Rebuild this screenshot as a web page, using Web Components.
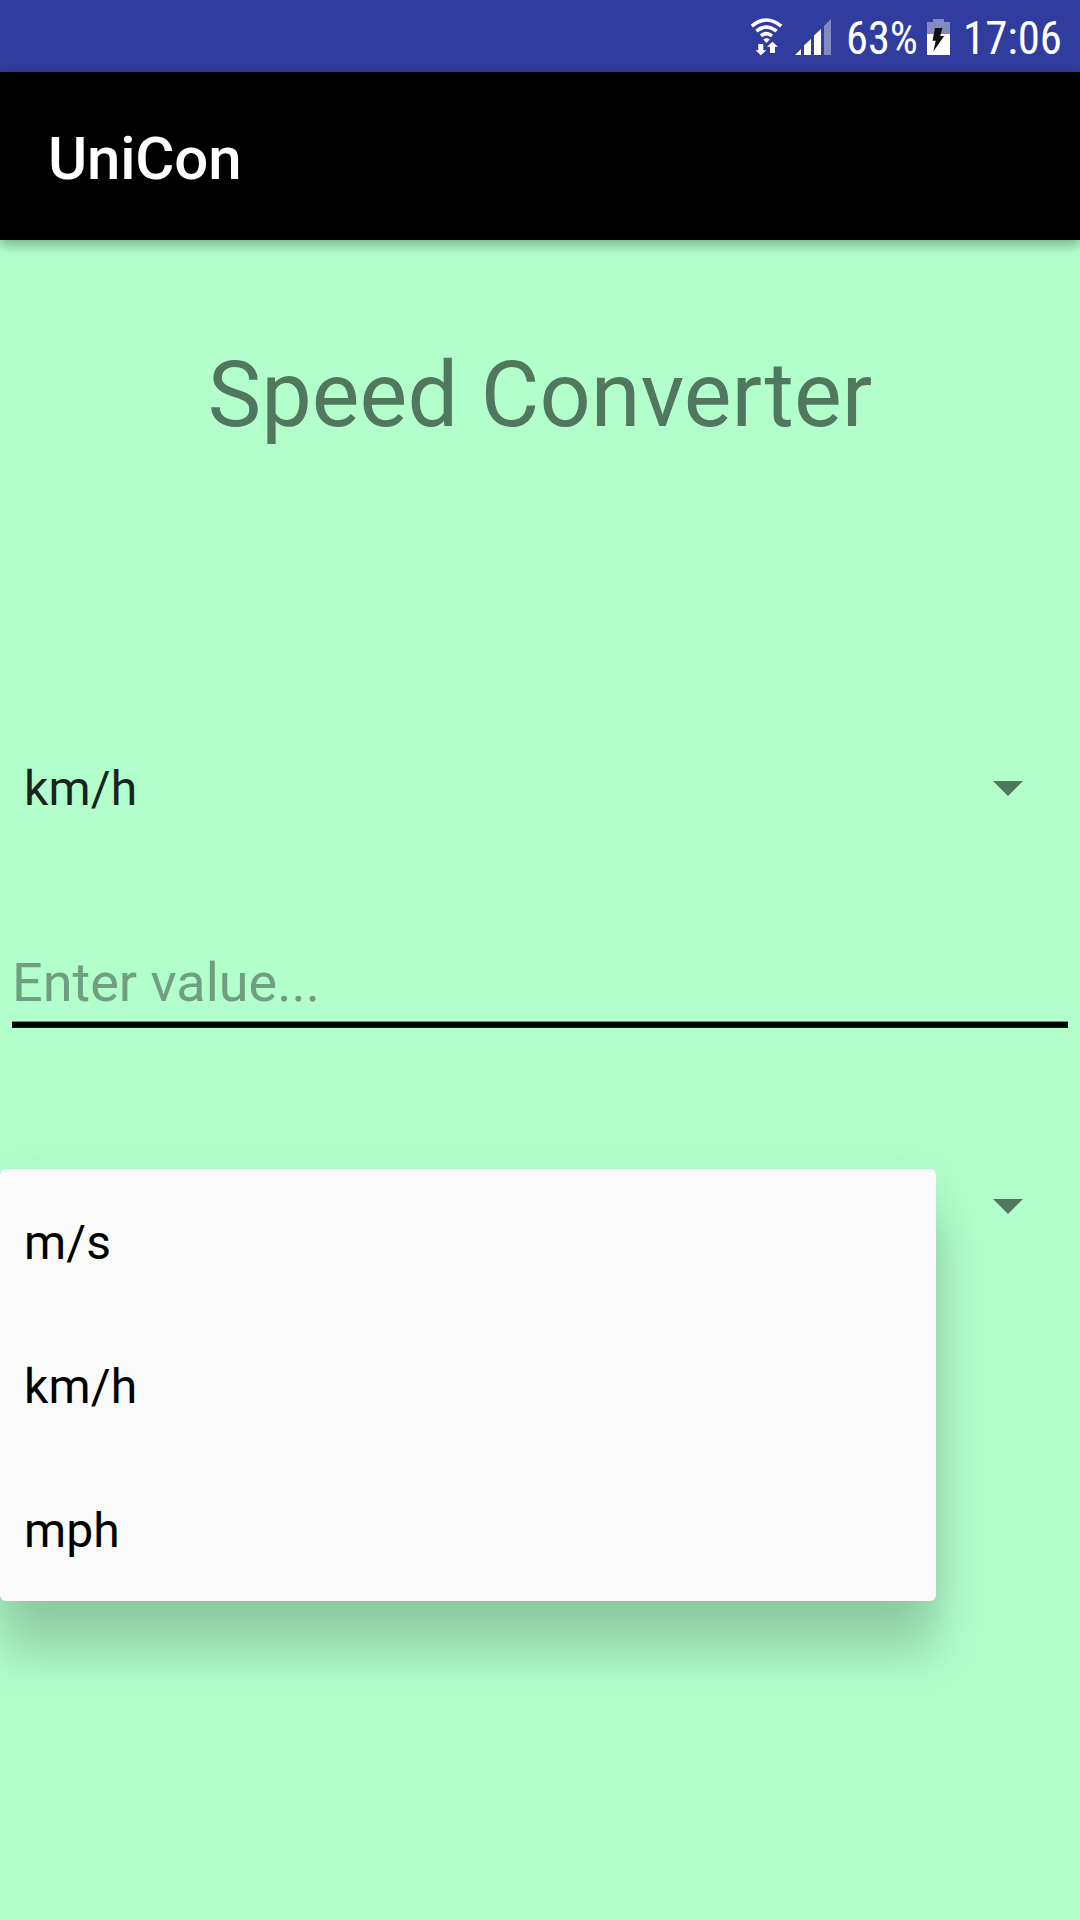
<!DOCTYPE html>
<html lang="en">
<head>
<meta charset="utf-8">
<title>UniCon</title>
<style>
html, body { margin: 0; height: 100%; background: #b2ffcc; }
body { font-family: Roboto, "Noto Sans", sans-serif; overflow: hidden; }
</style>
</head>
<body>
<converter-screen></converter-screen>
<script>
const define = (name, html) => {
  const t = document.createElement('template');
  t.innerHTML = html;
  customElements.define(name, class extends HTMLElement {
    constructor() {
      super();
      this.attachShadow({ mode: 'open' }).append(t.content.cloneNode(true));
    }
  });
};

define('status-bar', `
<style>
:host { display: block; height: 72px; background: #303d9e; }
svg { display: block; }
text { font-family: "Roboto Condensed", Roboto, sans-serif; font-size: 46px; fill: #fff; }
</style>
<svg width="1080" height="72" viewBox="0 0 1080 72">
  <g fill="none" stroke="#fff" stroke-width="3.6">
    <path d="M751.8 26.2Q766.5 13.8 781.2 26.2"/>
    <path d="M756.4 31.2Q766.5 22.8 776.6 31.2"/>
    <path d="M761 35.8Q766.5 31.3 772 35.8"/>
  </g>
  <path fill="#fff" d="M763.3 39.6Q766.5 37 769.7 39.6L766.5 43z"/>
  <path fill="#fff" d="M758.3 44h5v6.3h3L760.8 55.300l-5.200-5h2.700z"/>
  <path fill="#fff" d="M770 53v-6.300h-3L772.400 41.700l5.500 5H775V53z"/>
  <path fill="#fff" d="M795 55l6-6v6zM804 55V45.500l7-6.500V55zM814 55V35.500l7-6.500V55z"/>
  <path fill="#fff" fill-opacity=".4" d="M824 55V26l7-7V55z"/>
  <text x="846" y="54" textLength="72" lengthAdjust="spacingAndGlyphs">63%</text>
  <path fill="#fff" fill-opacity=".4" d="M933 19h11v3h6v12H927V22h6z"/>
  <path fill="#fff" d="M927 34h23v21H927z"/>
  <path fill="#111" d="M935 28h7.500l-2.300 8h4L933.300 51.500l2.400-10.700H932.500z"/>
  <text x="963" y="54" textLength="99" lengthAdjust="spacingAndGlyphs">17:06</text>
</svg>`);

define('app-bar', `
<style>
:host { display: flex; align-items: center; box-sizing: border-box; height: 168px; padding: 5px 48px 0;
  background: #000; color: #fff; font-size: 60px; line-height: 71px; font-weight: 500; letter-spacing: -.2px;
  position: relative; z-index: 1; box-shadow: 0 5px 12px rgba(0,0,0,.32); }
</style><slot></slot>`);

define('page-title', `
<style>
:host { display: block; box-sizing: border-box; padding-top: 103px; height: 476px; text-align: center;
  color: #52775f; font-size: 90px; line-height: 105px; letter-spacing: .1px; }
</style><slot></slot>`);

define('unit-spinner', `
<style>
:host { display: flex; align-items: center; justify-content: space-between; height: 144px;
  padding: 0 57px 0 24px; font-size: 48px; letter-spacing: .15px; color: #19241d; }
span { padding-top: 1px; }
svg { display: block; margin-top: 1px; }
</style>
<span><slot></slot></span>
<svg width="30" height="15" viewBox="0 0 30 15"><path d="M0 0h30L15 15z" fill="#52775f"/></svg>`);

define('value-field', `
<style>
:host { display: flex; flex-direction: column; margin: 91px 12px 0; }
span { height: 70px; line-height: 63px; font-size: 54px; color: #709e80; }
i { display: block; height: 7px; background: #000; border-top: 1px solid #64906f; border-bottom: 1px solid #16201a; box-sizing: border-box; }
</style>
<span><slot></slot></span><i></i>`);

define('menu-item', `
<style>
:host { display: flex; align-items: center; box-sizing: border-box; height: 144px; padding: 3px 24px 0;
  font-size: 48px; letter-spacing: .15px; color: #000; }
</style><slot></slot>`);

define('drop-menu', `
<style>
:host { display: block; width: 936px; background: #fafafa; border-radius: 6px;
  box-shadow: 0 52px 50px 2px rgba(0,0,0,.18), 0 5px 44px rgba(0,0,0,.07); }
</style><slot></slot>`);

define('converter-screen', `
<style>
:host { display: flex; flex-direction: column; width: 1080px; height: 1920px; background: #b2ffcc; overflow: hidden; }
.target { position: relative; margin-top: 106px; }
drop-menu { position: absolute; left: 0; top: 35px; }
</style>
<status-bar></status-bar>
<app-bar>UniCon</app-bar>
<page-title>Speed Converter</page-title>
<unit-spinner>km/h</unit-spinner>
<value-field>Enter value...</value-field>
<div class="target">
  <unit-spinner></unit-spinner>
  <drop-menu>
    <menu-item>m/s</menu-item>
    <menu-item>km/h</menu-item>
    <menu-item>mph</menu-item>
  </drop-menu>
</div>`);
</script>
</body>
</html>
